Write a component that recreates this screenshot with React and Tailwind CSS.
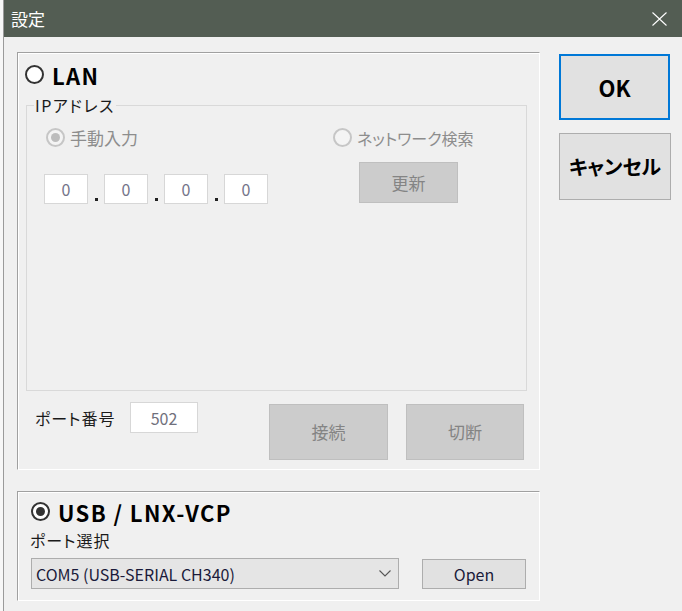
const jp = "font-['Meiryo_UI','Noto_Sans_CJK_JP',sans-serif] [font-feature-settings:'palt']"

function Radio({ checked, disabled }) {
  return (
    <span
      className={`flex h-[19px] w-[19px] shrink-0 items-center justify-center rounded-full border-2 ${
        disabled ? 'border-[#c6c6c6] bg-[#f4f4f4]' : 'border-[#333333] bg-white'
      }`}
    >
      {checked && (
        <span className={`h-[9px] w-[9px] rounded-full ${disabled ? 'bg-[#bdbdbd]' : 'bg-[#333333]'}`} />
      )}
    </span>
  )
}

function IpBox() {
  return (
    <div className="flex h-[30px] w-[44px] items-center justify-center border border-[#d7d7d7] bg-white text-[16px] text-[#74748a]">
      0
    </div>
  )
}

function IpDot() {
  return (
    <div className="flex h-[30px] w-[16px] items-end justify-center pb-[3px]">
      <span className="h-[3px] w-[3px] bg-[#222222]" />
    </div>
  )
}

function GrayButton({ children, className }) {
  return (
    <div
      className={`flex items-center justify-center border border-[#bfbfbf] bg-[#cccccc] text-[17px] text-[#848484] ${className}`}
    >
      {children}
    </div>
  )
}

export default function App() {
  return (
    <div className={`flex h-[611px] w-[682px] overflow-hidden bg-white ${jp}`}>
      {/* background window edge */}
      <div className="w-[4px] border-r border-[#9a9a9a] bg-[#f7f7f7]" />

      <div className="flex flex-1 flex-col">
        {/* Title bar */}
        <div className="flex h-[37px] items-center justify-between bg-[#535d53] pl-[7px] pr-[15px]">
          <span className="text-[17px] leading-none text-white">設定</span>
          <svg width="15" height="14" viewBox="0 0 15 14" className="mt-[1px]">
            <path d="M0.5 0.5 L14.5 13.5 M14.5 0.5 L0.5 13.5" stroke="#ffffff" strokeWidth="1.1" fill="none" />
          </svg>
        </div>

        {/* Body */}
        <div className="flex flex-1 bg-[#f0f0f0] pl-[13px]">
          <div className="flex w-[523px] flex-col pt-[15px]">
            {/* LAN group */}
            <div className="flex h-[418px] flex-col border border-b-white border-l-[#a0a0a0] border-r-white border-t-[#a0a0a0] shadow-[inset_1px_1px_0_#ffffff]">
              <div className="ml-[7px] mt-[12px] flex h-[19px] items-center">
                <Radio />
                <span className="ml-[8px] text-[22px] font-bold leading-none tracking-[1.4px] text-black">LAN</span>
              </div>

              <div className="relative ml-[8px] mr-[12px] mt-[21px] flex h-[286px] border border-[#d9d9d9] pt-[22px]">
                <span className="absolute -top-[11px] left-[7px] bg-[#f0f0f0] px-[1px] text-[16px] leading-[20px] tracking-[1.5px] text-[#1a1a1a]">
                  IPアドレス
                </span>

                <div className="ml-[17px] flex w-[289px] flex-col">
                  <div className="ml-[2px] flex h-[19px] items-center">
                    <Radio checked disabled />
                    <span className="ml-[5px] text-[17px] leading-none text-[#8d8d8d]">手動入力</span>
                  </div>
                  <div className="mt-[27px] flex">
                    <IpBox />
                    <IpDot />
                    <IpBox />
                    <IpDot />
                    <IpBox />
                    <IpDot />
                    <IpBox />
                  </div>
                </div>

                <div className="flex flex-col">
                  <div className="flex h-[19px] items-center">
                    <Radio disabled />
                    <span className="ml-[5px] text-[16px] leading-none text-[#8d8d8d]">ネットワーク検索</span>
                  </div>
                  <GrayButton className="ml-[26px] mt-[15px] h-[41px] w-[99px]">更新</GrayButton>
                </div>
              </div>

              <div className="mt-[11px] flex items-start">
                <div className="flex h-[31px] items-center">
                  <span className="ml-[17px] w-[95px] text-[16px] leading-none tracking-[1px] text-[#1a1a1a]">ポート番号</span>
                  <div className="flex h-[31px] w-[68px] items-center justify-center border border-[#d7d7d7] bg-white text-[16px] text-[#70707c]">
                    502
                  </div>
                </div>
                <GrayButton className="ml-[71px] mt-[2px] h-[56px] w-[119px]">接続</GrayButton>
                <GrayButton className="ml-[18px] mt-[2px] h-[56px] w-[118px]">切断</GrayButton>
              </div>
            </div>

            {/* USB group */}
            <div className="mt-[21px] flex h-[110px] flex-col border border-b-white border-l-[#a0a0a0] border-r-white border-t-[#a0a0a0] shadow-[inset_1px_1px_0_#ffffff]">
              <div className="ml-[13px] mt-[10px] flex h-[19px] items-center">
                <Radio checked />
                <span className="ml-[8px] text-[22px] font-bold leading-none tracking-[1.4px] text-black">USB / LNX-VCP</span>
              </div>
              <span className="ml-[12px] mt-[9px] text-[16px] leading-[20px] tracking-[1px] text-[#1a1a1a]">ポート選択</span>
              <div className="mt-[8px] flex items-start">
                <div className="ml-[13px] flex h-[31px] w-[368px] items-center justify-between border border-[#adadad] bg-[#e5e5e5] pl-[4px] pr-[7px]">
                  <span className="text-[16px] leading-none text-[#1a1a3a]">COM5 (USB-SERIAL CH340)</span>
                  <svg width="12" height="7" viewBox="0 0 12 7">
                    <path d="M0.5 0.5 L6 6 L11.5 0.5" stroke="#555555" strokeWidth="1.1" fill="none" />
                  </svg>
                </div>
                <div className="ml-[23px] mt-[1px] flex h-[30px] w-[104px] items-center justify-center border border-[#adadad] bg-[#e1e1e1] text-[16px] text-[#1a1a3a]">
                  Open
                </div>
              </div>
            </div>
          </div>

          {/* Dialog buttons */}
          <div className="ml-[19px] flex flex-col pt-[17px]">
            <div className="flex h-[66px] w-[111px] items-center justify-center border-2 border-[#0078d7] bg-[#e1e1e1] text-[22px] font-bold text-black">
              OK
            </div>
            <div className="mt-[13px] flex h-[67px] w-[112px] items-center justify-center border border-[#adadad] bg-[#e1e1e1] text-[20px] font-bold text-black">
              キャンセル
            </div>
          </div>
        </div>
      </div>
    </div>
  )
}
